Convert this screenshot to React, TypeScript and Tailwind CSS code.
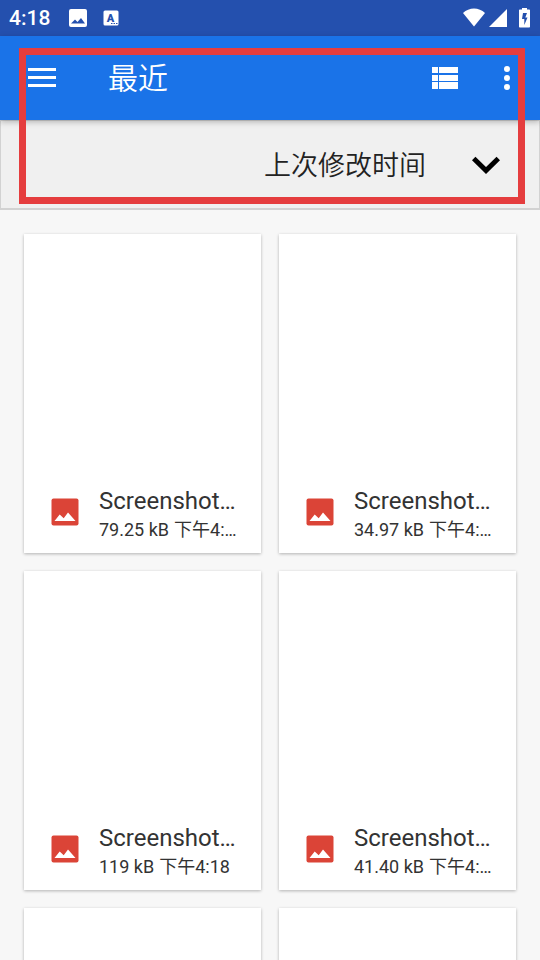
import React from 'react';

const files = [
  { id: 1, name: 'Screenshot…', size: '79.25 kB', time: '下午4:…' },
  { id: 2, name: 'Screenshot…', size: '34.97 kB', time: '下午4:…' },
  { id: 3, name: 'Screenshot…', size: '119 kB', time: '下午4:18' },
  { id: 4, name: 'Screenshot…', size: '41.40 kB', time: '下午4:…' },
  { id: 5, name: '', size: '', time: '' },
  { id: 6, name: '', size: '', time: '' },
];

function StatusBar() {
  return (
    <div className="flex h-9 items-center bg-[#2450ae] pr-[9px] pl-[9px] text-white">
      <span className="text-[21px] leading-6 font-medium">4:18</span>
      <svg className="ml-[19px] h-[18px] w-[18px]" viewBox="0 0 18 18" fill="currentColor">
        <path fillRule="evenodd" d="M2 0h14a2 2 0 0 1 2 2v14a2 2 0 0 1-2 2H2a2 2 0 0 1-2-2V2a2 2 0 0 1 2-2zm0 14.500h14L12 9l-3.500 4L6 10.500z" />
      </svg>
      <svg className="ml-4 h-4 w-4" viewBox="0 0 16 16">
        <rect x="0.500" y="0.500" width="15" height="15" rx="1.500" fill="#fff" />
        <text x="7.500" y="11.500" textAnchor="middle" fontSize="11" fontWeight="900" fill="#2450ae">A</text>
        <path d="M8 13.500h1.500M10.500 13.500H12M13 13.500h1.500" stroke="#2450ae" strokeWidth="1.200" />
      </svg>
      <div className="ml-auto flex items-center">
        <svg className="h-5 w-6" viewBox="0 0 24 20" fill="currentColor">
          <path d="M12 18.500 1 5C4 2 8 .5 12 .5S20 2 23 5z" />
        </svg>
        <svg className="ml-[3px] h-5 w-[18px]" viewBox="0 0 18 20" fill="currentColor">
          <path d="M18 1v18H0z" />
        </svg>
        <svg className="ml-[11px] h-5 w-[13px]" viewBox="0 0 13 20" fill="currentColor">
          <path fillRule="evenodd" d="M4 0h5v1.500h2.200a.8.8 0 0 1 .8.8v16.400a.8.8 0 0 1-.8.8H1.800a.8.8 0 0 1-.8-.8V2.300a.8.8 0 0 1 .8-.8H4zm1 5L4 11h2.300v6L9.500 9.500H7.300L9 5z" />
        </svg>
      </div>
    </div>
  );
}

function Header() {
  return (
    <header className="relative z-10 flex h-[84px] items-center bg-[#1a73e8] pr-[15px] pl-7 text-white shadow-[0_2px_6px_rgba(0,0,0,0.25)]">
      <button type="button" aria-label="菜单">
        <svg className="h-7 w-7" viewBox="0 0 28 28" fill="currentColor">
          <path d="M0 4h28v3H0zM0 12h28v3H0zM0 20h28v3H0z" />
        </svg>
      </button>
      <h1 className="ml-[52px] pt-[2px] text-[30px] leading-9 font-[350]">最近</h1>
      <button type="button" aria-label="列表视图" className="ml-auto">
        <svg className="h-9 w-9" viewBox="0 0 36 36" fill="currentColor">
          <path d="M5 7h6v6H5zM12 7h19v6H12zM5 15h6v6H5zM12 15h19v6H12zM5 22h6v7H5zM12 22h19v7H12z" />
        </svg>
      </button>
      <button type="button" aria-label="更多选项" className="ml-[26px]">
        <svg className="h-9 w-9" viewBox="0 0 36 36" fill="currentColor">
          <circle cx="18" cy="9" r="3" />
          <circle cx="18" cy="18" r="3" />
          <circle cx="18" cy="27" r="3" />
        </svg>
      </button>
    </header>
  );
}

function SortBar() {
  return (
    <div className="flex h-[90px] items-center justify-end border border-b-2 border-[#d2d2d2] bg-[#f0f0f0] pr-[39px]">
      <div className="grid items-center">
        <select
          aria-label="排序方式"
          defaultValue="modified"
          className="col-start-1 row-start-1 appearance-none bg-transparent pt-[2px] pr-[74px] text-[27px] leading-10 font-[350] text-[#222222] outline-none"
        >
          <option value="modified">上次修改时间</option>
        </select>
        <svg
          className="pointer-events-none col-start-1 row-start-1 h-7 w-7 justify-self-end"
          viewBox="0 0 28 28"
          fill="none"
          stroke="#000"
          strokeWidth="5"
        >
          <path d="M1.700 7.500 14 19.500l12.300-12" />
        </svg>
      </div>
    </div>
  );
}

function FileCard({ name, size, time }: { name: string; size: string; time: string }) {
  return (
    <li className="flex h-[319px] flex-col justify-end bg-white shadow-[0_1px_3px_rgba(0,0,0,0.28)]">
      {name && (
        <div className="flex items-start pr-6 pb-[9px] pl-[27px]">
          <svg className="mt-3 h-7 w-7 shrink-0" viewBox="0 0 28 28">
            <rect x="0.500" y="0.500" width="27" height="27" rx="2" fill="#db4437" />
            <path d="M3.500 23 8.700 16.500l4 3.700L17 14.500 24.500 23z" fill="#fff" />
          </svg>
          <div className="ml-5 min-w-0 text-[#333333]">
            <p className="truncate text-2xl leading-[30px]">{name}</p>
            <p className="flex gap-[5px] text-lg leading-7 whitespace-nowrap">
              <span>{size}</span>
              <span>{time}</span>
            </p>
          </div>
        </div>
      )}
    </li>
  );
}

export default function App() {
  return (
    <div className="relative h-screen overflow-hidden bg-[#f7f7f7] font-['Roboto','Noto_Sans_CJK_SC',sans-serif]" lang="zh-CN">
      <StatusBar />
      <Header />
      <SortBar />
      <ul className="grid grid-cols-2 gap-[18px] p-6">
        {files.map((file) => (
          <FileCard key={file.id} name={file.name} size={file.size} time={file.time} />
        ))}
      </ul>

      {/* Highlight frame over the toolbar and sort bar */}
      <div className="pointer-events-none absolute top-12 right-[15px] left-[19px] z-20 h-[156px] border-[7px] border-[#e53d3e]"></div>
    </div>
  );
}
